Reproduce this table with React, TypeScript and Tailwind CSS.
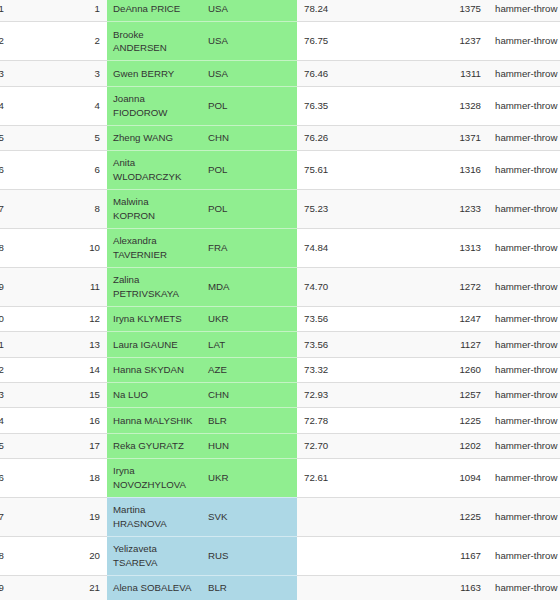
import React from 'react';

type Athlete = {
  idx: number;
  rank: number;
  name: string;
  country: string;
  mark: string;
  points: number;
  qualified: boolean;
};

// names with "\n" wrap onto two lines in the narrow name column
const athletes: Athlete[] = [
  { idx: 1, rank: 1, name: 'DeAnna PRICE', country: 'USA', mark: '78.24', points: 1375, qualified: true },
  { idx: 2, rank: 2, name: 'Brooke\nANDERSEN', country: 'USA', mark: '76.75', points: 1237, qualified: true },
  { idx: 3, rank: 3, name: 'Gwen BERRY', country: 'USA', mark: '76.46', points: 1311, qualified: true },
  { idx: 4, rank: 4, name: 'Joanna\nFIODOROW', country: 'POL', mark: '76.35', points: 1328, qualified: true },
  { idx: 5, rank: 5, name: 'Zheng WANG', country: 'CHN', mark: '76.26', points: 1371, qualified: true },
  { idx: 6, rank: 6, name: 'Anita\nWLODARCZYK', country: 'POL', mark: '75.61', points: 1316, qualified: true },
  { idx: 7, rank: 8, name: 'Malwina\nKOPRON', country: 'POL', mark: '75.23', points: 1233, qualified: true },
  { idx: 8, rank: 10, name: 'Alexandra\nTAVERNIER', country: 'FRA', mark: '74.84', points: 1313, qualified: true },
  { idx: 9, rank: 11, name: 'Zalina\nPETRIVSKAYA', country: 'MDA', mark: '74.70', points: 1272, qualified: true },
  { idx: 10, rank: 12, name: 'Iryna KLYMETS', country: 'UKR', mark: '73.56', points: 1247, qualified: true },
  { idx: 11, rank: 13, name: 'Laura IGAUNE', country: 'LAT', mark: '73.56', points: 1127, qualified: true },
  { idx: 12, rank: 14, name: 'Hanna SKYDAN', country: 'AZE', mark: '73.32', points: 1260, qualified: true },
  { idx: 13, rank: 15, name: 'Na LUO', country: 'CHN', mark: '72.93', points: 1257, qualified: true },
  { idx: 14, rank: 16, name: 'Hanna MALYSHIK', country: 'BLR', mark: '72.78', points: 1225, qualified: true },
  { idx: 15, rank: 17, name: 'Reka GYURATZ', country: 'HUN', mark: '72.70', points: 1202, qualified: true },
  { idx: 16, rank: 18, name: 'Iryna\nNOVOZHYLOVA', country: 'UKR', mark: '72.61', points: 1094, qualified: true },
  { idx: 17, rank: 19, name: 'Martina\nHRASNOVA', country: 'SVK', mark: '', points: 1225, qualified: false },
  { idx: 18, rank: 20, name: 'Yelizaveta\nTSAREVA', country: 'RUS', mark: '', points: 1167, qualified: false },
  { idx: 19, rank: 21, name: 'Alena SOBALEVA', country: 'BLR', mark: '', points: 1163, qualified: false },
  { idx: 20, rank: 22, name: 'Sophie HITCHON', country: 'GBR', mark: '', points: 1158, qualified: false },
];

export default function App() {
  return (
    <div
      className="w-[560px] h-[600px] overflow-hidden bg-white text-[#333] text-[9.7px] leading-[13.67px]"
      style={{ fontFamily: '"Liberation Sans", Arial, sans-serif' }}
    >
      <div className="-mt-[4px] -ml-[31px] w-[640px]">
        {athletes.map((a) => {
          const stripe = a.idx % 2 === 1 ? 'bg-[#f9f9f9]' : 'bg-white';
          const hl = a.qualified
            ? 'bg-[#90ee90] border-[#c4f3c4]'
            : 'bg-[#add8e6] border-[#d2e9f1]';
          const cell = `border-t border-[#dddddd] py-[5.33px] flex items-center ${stripe}`;
          return (
            <div key={a.idx} className="flex items-stretch">
              <div className={`${cell} w-[40px] justify-end pr-[5px]`}>{a.idx}</div>
              <div className={`${cell} w-[98px] justify-end pr-[7px]`}>{a.rank}</div>
              <div className={`border-t py-[5.33px] flex items-center w-[95px] px-[6px] whitespace-pre-line ${hl}`}>
                {a.name}
              </div>
              <div className={`border-t py-[5.33px] flex items-center w-[95px] px-[6px] ${hl}`}>{a.country}</div>
              <div className={`${cell} w-[128px] pl-[7px]`}>{a.mark}</div>
              <div className={`${cell} w-[63px] justify-end pr-[7px]`}>{a.points}</div>
              <div className={`${cell} w-[121px] pl-[7px] whitespace-nowrap`}>hammer-throw</div>
            </div>
          );
        })}
      </div>
    </div>
  );
}
